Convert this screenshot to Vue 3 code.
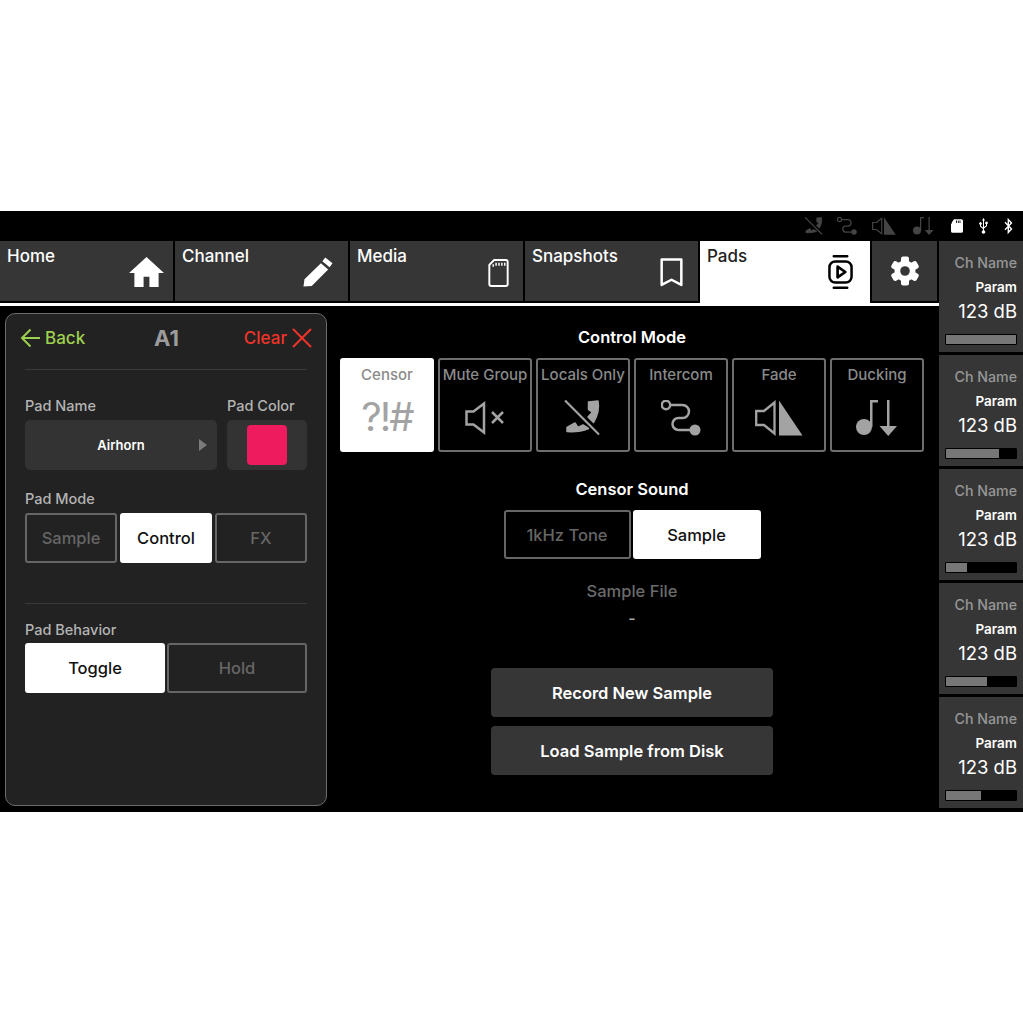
<script setup>
const tabs = [
  { name: 'Home', icon: 'home' },
  { name: 'Channel', icon: 'pencil' },
  { name: 'Media', icon: 'card' },
  { name: 'Snapshots', icon: 'bookmark' },
  { name: 'Pads', icon: 'pads', active: true },
]
const modes = [
  { name: 'Censor', icon: 'censor', active: true },
  { name: 'Mute Group', icon: 'mute' },
  { name: 'Locals Only', icon: 'phone' },
  { name: 'Intercom', icon: 'route' },
  { name: 'Fade', icon: 'fade' },
  { name: 'Ducking', icon: 'duck' },
]
const strips = [100, 76, 30, 58, 50]
</script>

<template>
  <div class="page">
    <div class="device">
      <div class="status">
        <svg class="st dim s-phone" viewBox="0 0 40 36"><use href="#i-phone" /></svg>
        <svg class="st dim s-route" viewBox="0 0 40 36"><use href="#i-route" /></svg>
        <svg class="st dim s-fade" viewBox="0 0 48 36"><use href="#i-fade" /></svg>
        <svg class="st dim s-duck" viewBox="0 0 42 36"><use href="#i-duck" /></svg>
        <svg class="st s-card" viewBox="0 0 14 16"><path fill="#fff" d="M3.500 0H12a2 2 0 0 1 2 2v12a2 2 0 0 1-2 2H2a2 2 0 0 1-2-2V5.500L1 5V3.500ZM6 1.500v3h1v-3Zm2 0v3h1v-3Zm2 0v3h1v-3Z" /></svg>
        <svg class="st s-usb" viewBox="0 0 11 16"><path fill="#fff" d="M5.500 0 7 2.500H6V9l2-1.500V6H7.300V3.800h2.400V6H9v2L6 10.500V12.300a1.800 1.800 0 1 1-1 0V11L2 8.500V6.700a1.300 1.300 0 1 1 1 0V8l2 1.500v-7H4Z" /></svg>
        <svg class="st s-bt" viewBox="0 0 9 16"><path fill="none" stroke="#fff" stroke-width="1.400" d="M1 4.200 7.500 11 4.300 14.500V1.500L7.500 5 1 11.800" /></svg>
      </div>

      <div class="body">
        <div class="workspace">
          <nav class="tabs">
            <div v-for="t in tabs" :key="t.name" class="tab" :class="{ on: t.active }">
              <span class="tab-name">{{ t.name }}</span>
              <svg v-if="t.icon === 'home'" class="tab-icon home" viewBox="0 0 36 32"><path fill="#fff" d="M18 0 36 16.500H30.500V31H21V20.500H15V31H5.500V16.500H0Z" /></svg>
              <svg v-else-if="t.icon === 'pencil'" class="tab-icon pencil" viewBox="0 0 31 31"><path fill="#fff" d="M23 0.500 30.500 6.500 27.500 10.500 20 4.500ZM18.500 6.500 26 13 9 30 0.500 30.500 1.500 23Z" /></svg>
              <svg v-else-if="t.icon === 'card'" class="tab-icon card" viewBox="0 0 21 29"><path fill="none" stroke="#fff" stroke-width="2" d="M6 1H18a2 2 0 0 1 2 2V26a2 2 0 0 1-2 2H3a2 2 0 0 1-2-2V6Z" /><path fill="none" stroke="#fff" stroke-width="1.500" d="M5 8V5.500M8 7V4M11 7V4M14 7V4M17 7V4" /></svg>
              <svg v-else-if="t.icon === 'bookmark'" class="tab-icon bookmark" viewBox="0 0 22 28"><path fill="none" stroke="#fff" stroke-width="2.400" stroke-linejoin="round" d="M1.500 1.500H20.500V26L11 21 1.500 26Z" /></svg>
              <svg v-else class="tab-icon pads" viewBox="0 0 26 36"><path fill="none" stroke="#000" stroke-width="2.600" stroke-linecap="round" d="M6 1.500H20M6 34.500H20" /><rect x="1.500" y="7" width="23" height="22" rx="6" fill="none" stroke="#000" stroke-width="2.600" /><path fill="none" stroke="#000" stroke-width="2.800" stroke-linejoin="round" d="M10 12.500 18 18 10 23.500Z" /></svg>
            </div>
            <div class="tab gear">
              <svg viewBox="0 0 30 30" width="30" height="30">
                <g fill="#fff">
                  <rect x="11" y="0.500" width="8" height="29" rx="2" />
                  <rect x="11" y="0.500" width="8" height="29" rx="2" transform="rotate(60 15 15)" />
                  <rect x="11" y="0.500" width="8" height="29" rx="2" transform="rotate(120 15 15)" />
                  <circle cx="15" cy="15" r="10.500" />
                </g>
                <circle cx="15" cy="15" r="4.800" fill="#363636" />
              </svg>
            </div>
          </nav>
          <div class="rule"></div>

          <div class="content">
            <aside class="panel">
              <header class="panel-head">
                <span class="back">
                  <svg width="21" height="20" viewBox="0 0 21 20"><path fill="none" stroke="#9ed04f" stroke-width="2" d="M20 10H2M10.500 1.500 2 10l8.500 8.500" /></svg>
                  Back
                </span>
                <span class="pad-id">A1</span>
                <span class="clear">
                  Clear
                  <svg width="20" height="20" viewBox="0 0 20 20"><path fill="none" stroke="#f0342a" stroke-width="2" d="M1 1 19 19M19 1 1 19" /></svg>
                </span>
              </header>
              <div class="divider head-line"></div>

              <div class="name-row">
                <div class="name-col">
                  <div class="label">Pad Name</div>
                  <div class="field name-field">
                    <span>Airhorn</span>
                    <i class="arrow"></i>
                  </div>
                </div>
                <div class="color-col">
                  <div class="label">Pad Color</div>
                  <div class="field color-field"><i class="swatch"></i></div>
                </div>
              </div>

              <div class="label mode-label">Pad Mode</div>
              <div class="seg three">
                <div class="seg-btn">Sample</div>
                <div class="seg-btn on">Control</div>
                <div class="seg-btn">FX</div>
              </div>

              <div class="divider mid-line"></div>

              <div class="label">Pad Behavior</div>
              <div class="seg two">
                <div class="seg-btn on">Toggle</div>
                <div class="seg-btn">Hold</div>
              </div>
            </aside>

            <main class="control">
              <h2 class="title">Control Mode</h2>
              <div class="modes">
                <div v-for="m in modes" :key="m.name" class="mode" :class="{ on: m.active }">
                  <span class="mode-name">{{ m.name }}</span>
                  <span v-if="m.icon === 'censor'" class="censor">?!#</span>
                  <svg v-else-if="m.icon === 'mute'" class="mode-icon" width="40" height="36" viewBox="0 0 40 36">
                    <path fill="none" stroke="#a3a3a3" stroke-width="2.500" d="M1.500 11.500H8.500L19 3.500V32.500L8.500 24.500H1.500Z" /><path fill="none" stroke="#a3a3a3" stroke-width="2.500" d="M27 12 38 23M38 12 27 23" />
                  </svg>
                  <svg v-else-if="m.icon === 'phone'" class="mode-icon" width="40" height="36" viewBox="0 0 40 36"><use href="#i-phone" /></svg>
                  <svg v-else-if="m.icon === 'route'" class="mode-icon" width="40" height="36" viewBox="0 0 40 36"><use href="#i-route" /></svg>
                  <svg v-else-if="m.icon === 'fade'" class="mode-icon" width="48" height="36" viewBox="0 0 48 36"><use href="#i-fade" /></svg>
                  <svg v-else class="mode-icon" width="42" height="36" viewBox="0 0 42 36"><use href="#i-duck" /></svg>
                </div>
              </div>

              <h2 class="title sound">Censor Sound</h2>
              <div class="sound-seg">
                <div class="seg-btn dark">1kHz Tone</div>
                <div class="seg-btn on">Sample</div>
              </div>

              <div class="file-label">Sample File</div>
              <div class="file-value">-</div>

              <div class="action first">Record New Sample</div>
              <div class="action">Load Sample from Disk</div>
            </main>
          </div>
        </div>

        <aside class="strips">
          <div v-for="(s, i) in strips" :key="i" class="strip">
            <div class="ch">Ch Name</div>
            <div class="param">Param</div>
            <div class="db">123 dB</div>
            <div class="meter"><div class="meter-fill" :style="{ width: s + '%' }"></div></div>
          </div>
        </aside>
      </div>
    </div>

    <svg width="0" height="0" class="defs">
      <defs>
        <g id="i-phone" fill="#a3a3a3">
          <path stroke="#a3a3a3" stroke-width="1.500" stroke-linejoin="round" d="M25.500 2 35 1C36.500 9 34.500 16 30.500 22.500L25 17 29.500 12 25.500 9.500Z" />
          <path stroke="#a3a3a3" stroke-width="1.500" stroke-linejoin="round" d="M4 31.500V27.500L12 23 15 27.500 20 25 25.500 28.500C19.500 31 12 32 4 31.500Z" />
          <path fill="none" stroke="#a3a3a3" stroke-width="2.200" d="M2 .5 36 34.500" />
        </g>
        <g id="i-route">
          <circle cx="5" cy="5" r="4.200" fill="none" stroke="#a3a3a3" stroke-width="2.500" />
          <circle cx="34" cy="30" r="5.500" fill="#a3a3a3" />
          <path fill="none" stroke="#a3a3a3" stroke-width="2.500" d="M9.500 5H21.500A6.500 6.500 0 0 1 21.500 18H17.500A6 6 0 0 0 17.500 30H29" />
        </g>
        <g id="i-fade">
          <path fill="none" stroke="#a3a3a3" stroke-width="2.300" d="M1.200 11H9L19.500 2.500V33.500L9 25H1.200Z" />
          <path fill="#a3a3a3" d="M24 .5 47.500 35.500H24Z" />
        </g>
        <g id="i-duck" fill="#a3a3a3">
          <circle cx="8" cy="27" r="8" />
          <path d="M14 27V0H22V2.500H16.500V27ZM31 0H33.500V26H41L32.250 36 23.500 26H31Z" />
        </g>
      </defs>
    </svg>
  </div>
</template>

<style scoped>
.page {
  padding-top: 211px;
  height: 1023px;
  box-sizing: border-box;
  background: #fff;
  font-family: 'Inter', 'Liberation Sans', sans-serif;
  font-weight: 500;
}
.defs {
  position: absolute;
}
.device {
  background: #000;
  height: 601px;
  overflow: hidden;
}
.status {
  height: 30px;
  display: flex;
  align-items: center;
  justify-content: flex-end;
  padding-right: 10px;
}
.st {
  height: 18px;
}
.st.dim {
  opacity: 0.42;
}
.s-phone {
  width: 20px;
}
.s-route {
  width: 20px;
  margin-left: 13px;
}
.s-fade {
  width: 24px;
  margin-left: 15px;
}
.s-duck {
  width: 21px;
  margin-left: 17px;
}
.s-card {
  width: 12px;
  margin-left: 17px;
}
.s-usb {
  width: 11px;
  margin-left: 15px;
}
.s-bt {
  width: 9px;
  margin-left: 15px;
}
.body {
  display: flex;
}
.workspace {
  width: 939px;
}
.tabs {
  display: flex;
  gap: 2px;
  height: 60px;
  padding-right: 2px;
}
.tab {
  width: 173px;
  position: relative;
  background: #363636;
  color: #fff;
  font-size: 17px;
  padding: 5px 0 0 7px;
  box-sizing: border-box;
}
.tab-name {
  line-height: 20px;
  display: block;
}
.tab.on {
  width: 170px;
  height: 62px;
  background: #fff;
  color: #222;
}
.tab-icon {
  position: absolute;
}
.home {
  right: 9px;
  top: 16px;
  width: 35px;
  height: 31px;
}
.pencil {
  right: 15px;
  top: 16px;
  width: 30px;
  height: 30px;
}
.card {
  right: 14px;
  top: 18px;
  width: 21px;
  height: 28px;
}
.bookmark {
  right: 15px;
  top: 17px;
  width: 23px;
  height: 29px;
}
.pads {
  right: 17px;
  top: 13px;
  width: 25px;
  height: 36px;
}
.tab.gear {
  width: 65px;
  padding: 0;
  display: flex;
  align-items: center;
  justify-content: center;
}
.rule {
  height: 3px;
  margin-top: 2px;
  background: #fff;
}
.content {
  display: flex;
  padding: 7px 0 0 5px;
}
.panel {
  width: 322px;
  height: 493px;
  box-sizing: border-box;
  background: #222;
  border: 1px solid #6b6b6b;
  border-radius: 10px;
  padding: 0 19px;
}
.panel-head {
  height: 47px;
  margin: 0 -5px;
  display: flex;
  align-items: center;
  justify-content: space-between;
  font-size: 17px;
}
.back {
  color: #9ed04f;
  display: flex;
  align-items: center;
  gap: 4px;
}
.pad-id {
  color: #9c9c9c;
  font-size: 22px;
  font-weight: 700;
  margin-left: 4px;
}
.clear {
  color: #f0342a;
  display: flex;
  align-items: center;
  gap: 5px;
}
.divider {
  height: 1px;
  background: #3a3a3a;
}
.head-line {
  margin-top: 8px;
}
.name-row {
  display: flex;
  justify-content: space-between;
  margin-top: 26px;
}
.name-col {
  width: 192px;
}
.color-col {
  width: 80px;
}
.label {
  color: #b4b4b4;
  font-size: 14.500px;
  line-height: 20px;
}
.field {
  margin-top: 4px;
  height: 50px;
  background: #333;
  border-radius: 5px;
  display: flex;
  align-items: center;
  justify-content: center;
  position: relative;
  color: #fff;
  font-size: 13px;
  font-weight: 600;
}
.arrow {
  position: absolute;
  right: 10px;
  top: 19px;
  border-left: 8px solid #7b7b7b;
  border-top: 6px solid transparent;
  border-bottom: 6px solid transparent;
}
.swatch {
  width: 40px;
  height: 40px;
  border-radius: 4px;
  background: #ee1c5e;
}
.mode-label {
  margin-top: 19px;
}
.seg {
  display: flex;
  gap: 3px;
  margin-top: 4px;
}
.seg-btn {
  flex: 1;
  height: 50px;
  box-sizing: border-box;
  border: 2px solid #666;
  border-radius: 3px;
  display: flex;
  align-items: center;
  justify-content: center;
  color: #666;
  font-size: 16.500px;
}
.seg-btn.on {
  background: #fff;
  border-color: #fff;
  color: #111;
}
.seg.two {
  gap: 2px;
  margin-top: 3px;
}
.mid-line {
  margin: 40px 0 16px;
}
.control {
  width: 584px;
  margin-left: 13px;
  display: flex;
  flex-direction: column;
  align-items: center;
}
.title {
  margin: 14px 0 0;
  font-size: 16.500px;
  line-height: 20px;
  font-weight: 600;
  color: #fff;
}
.modes {
  display: flex;
  gap: 4px;
  margin-top: 11px;
  align-self: flex-start;
}
.mode {
  width: 94px;
  height: 94px;
  box-sizing: border-box;
  border: 2px solid #6e6e6e;
  border-radius: 3px;
  display: flex;
  flex-direction: column;
  align-items: center;
  color: #8a8a8a;
  font-size: 15px;
  padding-top: 5px;
}
.mode.on {
  background: #fff;
  border-color: #fff;
}
.mode-name {
  line-height: 20px;
  white-space: nowrap;
}
.mode-icon {
  margin-top: 15px;
}
.censor {
  font-size: 40px;
  font-weight: 400;
  line-height: 44px;
  color: #a3a3a3;
  margin-top: 10px;
  letter-spacing: -2px;
}
.title.sound {
  margin-top: 27px;
}
.sound-seg {
  display: flex;
  gap: 2px;
  margin-top: 11px;
}
.sound-seg .seg-btn {
  width: 127px;
  flex: none;
  height: 49px;
}
.sound-seg .on {
  width: 128px;
}
.file-label {
  margin-top: 22px;
  color: #6b6b6b;
  font-size: 16.500px;
  line-height: 20px;
}
.file-value {
  margin-top: 7px;
  color: #aaa;
  font-size: 16px;
  line-height: 20px;
}
.action {
  width: 282px;
  height: 49px;
  margin-top: 9px;
  background: #363636;
  border-radius: 4px;
  color: #fff;
  font-size: 16.500px;
  font-weight: 600;
  display: flex;
  align-items: center;
  justify-content: center;
}
.action.first {
  margin-top: 40px;
}
.strips {
  width: 84px;
  display: flex;
  flex-direction: column;
  gap: 3px;
}
.strip {
  height: 111px;
  background: #363636;
  box-sizing: border-box;
  padding: 13px 6px 0 6px;
  text-align: right;
}
.ch {
  color: #979797;
  font-size: 14.200px;
  line-height: 18px;
}
.param {
  color: #fff;
  font-size: 13.500px;
  font-weight: 600;
  line-height: 18px;
  margin-top: 6px;
}
.db {
  color: #fff;
  font-size: 18.500px;
  font-weight: 400;
  line-height: 24px;
  margin-top: 3px;
}
.meter {
  margin-top: 11px;
  height: 11px;
  background: #000;
  border: 1px solid #000;
  border-radius: 1px;
  box-sizing: border-box;
}
.meter-fill {
  height: 100%;
  background: #777;
}
</style>
